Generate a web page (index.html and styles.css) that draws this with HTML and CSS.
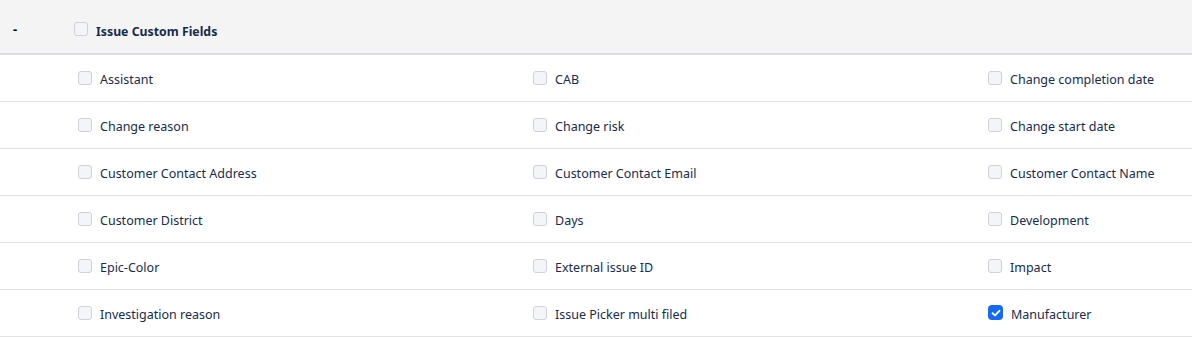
FILE: index.html
```html
<!DOCTYPE html>
<html lang="en">
<head>
  <meta charset="UTF-8">
  <title>Issue Custom Fields</title>
  <link rel="stylesheet" href="styles.css">
</head>
<body>
  <table class="fields">
    <colgroup>
      <col class="col-toggle">
      <col class="col-field">
      <col class="col-field">
      <col>
    </colgroup>
    <thead>
      <tr>
        <th class="toggle">-</th>
        <th class="group" colspan="3">
          <label class="check"><span class="box"></span><span class="group-name">Issue Custom Fields</span></label>
        </th>
      </tr>
    </thead>
    <tbody>
      <tr>
        <td></td>
        <td><label class="check"><span class="box"></span>Assistant</label></td>
        <td><label class="check"><span class="box"></span>CAB</label></td>
        <td><label class="check"><span class="box"></span>Change completion date</label></td>
      </tr>
      <tr>
        <td></td>
        <td><label class="check"><span class="box"></span>Change reason</label></td>
        <td><label class="check"><span class="box"></span>Change risk</label></td>
        <td><label class="check"><span class="box"></span>Change start date</label></td>
      </tr>
      <tr>
        <td></td>
        <td><label class="check"><span class="box"></span>Customer Contact Address</label></td>
        <td><label class="check"><span class="box"></span>Customer Contact Email</label></td>
        <td><label class="check"><span class="box"></span>Customer Contact Name</label></td>
      </tr>
      <tr>
        <td></td>
        <td><label class="check"><span class="box"></span>Customer District</label></td>
        <td><label class="check"><span class="box"></span>Days</label></td>
        <td><label class="check"><span class="box"></span>Development</label></td>
      </tr>
      <tr>
        <td></td>
        <td><label class="check"><span class="box"></span>Epic-Color</label></td>
        <td><label class="check"><span class="box"></span>External issue ID</label></td>
        <td><label class="check"><span class="box"></span>Impact</label></td>
      </tr>
      <tr>
        <td></td>
        <td><label class="check"><span class="box"></span>Investigation reason</label></td>
        <td><label class="check"><span class="box"></span>Issue Picker multi filed</label></td>
        <td>
          <label class="check">
            <span class="box checked">
              <svg width="10" height="10" viewBox="0 0 10 10"><path d="M1.6 5.2 L4 7.4 L8.4 2.8" fill="none" stroke="#fff" stroke-width="1.9" stroke-linecap="round" stroke-linejoin="round"/></svg>
            </span>Manufacturer
          </label>
        </td>
      </tr>
    </tbody>
  </table>
</body>
</html>
```

FILE: styles.css
```css
body {
  margin: 0;
  background: #fff;
  font-family: "Noto Sans", "Open Sans", sans-serif;
  font-size: 12.5px;
  color: #172b4d;
}
.fields {
  width: 1192px;
  border-collapse: collapse;
  table-layout: fixed;
}
.col-toggle {
  width: 67px;
}
.col-field {
  width: 455px;
}
thead tr {
  background: #f4f4f4;
  border-bottom: 2px solid #dcdce2;
}
thead th {
  height: 54px;
  padding: 9px 0 0 0;
  box-sizing: border-box;
  text-align: left;
  vertical-align: middle;
}
.toggle {
  padding-left: 13px !important;
  padding-bottom: 4px !important;
  font-size: 13px;
  font-weight: bold;
  color: #000;
}
.group {
  padding-left: 7px !important;
}
.group .box {
  margin-bottom: 4px;
}
.group-name {
  font-weight: bold;
  color: #172b4d;
  font-size: 12.3px;
}
tbody tr {
  border-bottom: 1px solid #e2e2e8;
}
tbody td {
  height: 47px;
  padding: 3px 0 0 11px;
  box-sizing: border-box;
  vertical-align: middle;
}
tbody .box {
  margin-bottom: 3px;
}
.check {
  display: flex;
  align-items: center;
  gap: 8px;
  white-space: nowrap;
}
.box {
  width: 12px;
  height: 12px;
  border: 1px solid #d0d1d9;
  border-radius: 3px;
  background: #f4f5f8;
  display: flex;
  align-items: center;
  justify-content: center;
  flex: none;
}
.box.checked {
  width: 15px;
  height: 15px;
  border: none;
  border-radius: 4px;
  background: #1669f2;
}
```
